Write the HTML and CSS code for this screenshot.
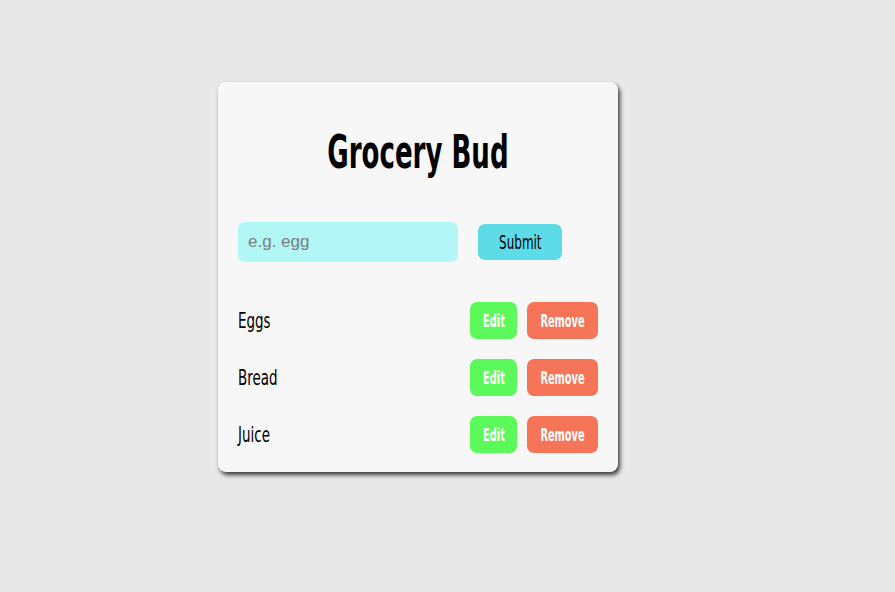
FILE: index.html
```html
<!DOCTYPE html>
<html>
<head>
<meta charset="utf-8">
<link rel="stylesheet" href="styles.css">
</head>
<body>
<main class="card">
  <h1 class="title"><span class="narrow">Grocery Bud</span></h1>
  <form class="add-form">
    <input class="add-input" type="text" placeholder="e.g. egg">
    <button class="submit-btn" type="button"><span class="narrow">Submit</span></button>
  </form>
  <ul class="list">
    <li class="item"><span class="item-name narrow">Eggs</span><div class="actions"><button class="btn edit"><span class="narrow">Edit</span></button><button class="btn remove"><span class="narrow">Remove</span></button></div></li>
    <li class="item"><span class="item-name narrow">Bread</span><div class="actions"><button class="btn edit"><span class="narrow">Edit</span></button><button class="btn remove"><span class="narrow">Remove</span></button></div></li>
    <li class="item"><span class="item-name narrow">Juice</span><div class="actions"><button class="btn edit"><span class="narrow">Edit</span></button><button class="btn remove"><span class="narrow">Remove</span></button></div></li>
  </ul>
</main>
</body>
</html>
```
FILE: styles.css
```css
html, body {
  margin: 0;
  padding: 0;
}
body {
  background: #e8e8e8;
  font-family: "DejaVu Sans Condensed", "DejaVu Sans", sans-serif;
  padding: 82px 0 0 218px;
  height: 592px;
  box-sizing: border-box;
}
.narrow {
  display: inline-block;
  transform: scaleX(0.68);
  transform-origin: center;
  white-space: nowrap;
}
.card {
  width: 400px;
  box-sizing: border-box;
  background: #f7f7f7;
  border-radius: 8px;
  box-shadow: 2px 3px 4px rgba(0,0,0,0.75);
  padding: 40px 20px 19px;
}
.title {
  margin: 0;
  text-align: center;
  font-size: 46px;
  line-height: 60px;
  font-weight: bold;
  color: #000;
}
.title .narrow {
  transform: scaleX(0.63);
}
.add-form {
  display: flex;
  align-items: center;
  margin-top: 40px;
}
.add-input {
  width: 220px;
  height: 40px;
  box-sizing: border-box;
  border: none;
  border-radius: 7px;
  background: #b2f6f5;
  padding: 0 10px;
  font-family: "Liberation Sans", Arial, sans-serif;
  font-size: 17px;
  outline: none;
}
.add-input::placeholder {
  color: #7c7f80;
}
.submit-btn {
  margin-left: 20px;
  width: 84px;
  height: 36px;
  border: none;
  border-radius: 7px;
  background: #5ddce8;
  font-family: "DejaVu Sans Condensed", "DejaVu Sans", sans-serif;
  font-size: 19px;
  color: #000;
  padding: 0;
}
.submit-btn .narrow {
  transform: scaleX(0.7);
}
.list {
  list-style: none;
  margin: 40px 0 0;
  padding: 0;
  display: flex;
  flex-direction: column;
  gap: 20px;
}
.item {
  display: flex;
  align-items: center;
  justify-content: space-between;
  height: 37px;
}
.item-name {
  font-size: 22px;
  color: #000;
}
.item .item-name {
  transform-origin: left center;
  transform: scaleX(0.68);
}
.actions {
  display: flex;
  gap: 10px;
}
.btn {
  height: 37px;
  border: none;
  border-radius: 7px;
  color: #fff;
  font-family: "DejaVu Sans Condensed", "DejaVu Sans", sans-serif;
  font-weight: bold;
  font-size: 17px;
  padding: 0;
  overflow: hidden;
  white-space: nowrap;
}
.btn .narrow {
  transform: scaleX(0.64);
}
.edit {
  width: 47px;
  background: #5cf95a;
}
.remove {
  width: 71px;
  background: #f67559;
}
```
